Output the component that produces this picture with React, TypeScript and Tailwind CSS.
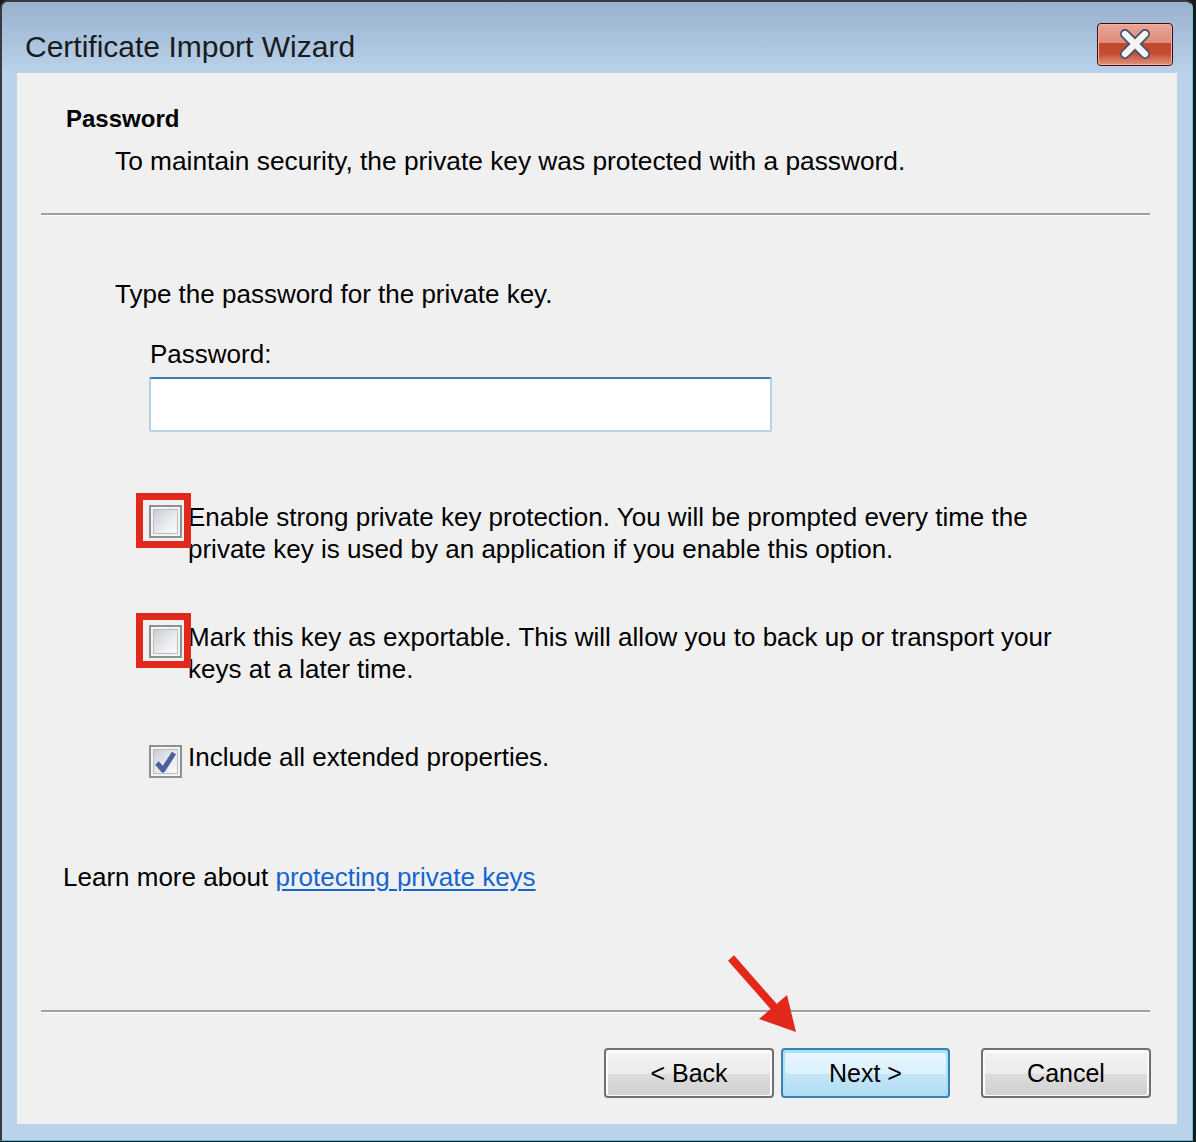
import React from 'react';

const Checkbox = ({ checked = false }: { checked?: boolean }) => (
  <div className="w-[33px] h-[33px] shrink-0 border-2 border-[#8e8f8f] bg-[#f4f4f4] p-[2px]">
    <div className="relative w-full h-full border border-[#b9bcc2] bg-gradient-to-br from-[#c9cdd4] via-[#e6e8eb] to-[#fafafa]">
      {checked && (
        <svg viewBox="0 0 23 23" className="absolute inset-0 w-full h-full">
          <path d="M3 13 L9 20 L20 3" fill="none" stroke="#4b62a0" strokeWidth="5" strokeLinejoin="round" />
        </svg>
      )}
    </div>
  </div>
);

const Highlight = () => (
  <div className="absolute -left-[13px] -top-[12px] w-[55px] h-[55px] border-[7px] border-[#e1281b]" />
);

const WinButton = ({ label, primary = false }: { label: string; primary?: boolean }) => (
  <button
    className={`h-[50px] rounded-[4px] border-2 p-[2px] ${
      primary ? 'w-[169px] border-[#3c7fb1] bg-[#a6e3f8]' : 'w-[170px] border-[#707070] bg-[#fbfbfb]'
    }`}
  >
    <div
      className={`flex h-full flex-col overflow-hidden rounded-[2px] ${
        primary ? 'bg-[#d6effb]' : 'bg-[#e7e7e7]'
      }`}
    >
      <div className={`h-1/2 ${primary ? 'bg-gradient-to-b from-[#eaf6fd] to-[#d9f0fc]' : 'bg-gradient-to-b from-[#f2f2f2] to-[#ebebeb]'}`} />
      <div className={`h-1/2 ${primary ? 'bg-gradient-to-b from-[#c4e6f8] to-[#b2dcf3]' : 'bg-gradient-to-b from-[#dddddd] to-[#d0d0d0]'}`} />
    </div>
    <span className="relative -mt-[42px] block text-[25px] leading-[40px] text-black">{label}</span>
  </button>
);

export default function App() {
  return (
    <div
      className="relative w-[1196px] h-[1142px] overflow-hidden bg-[#1a1a1a]"
      style={{ fontFamily: '"Liberation Sans", Arial, sans-serif' }}
    >
      {/* window frame */}
      <div className="flex w-[1193px] h-[1141px] flex-col rounded-t-[8px] border-t-2 border-l-2 border-r border-b border-t-[#3a3a3a] border-l-[#3a3a3a] border-r-[#5cc6de] border-b-[#4cc3dd] bg-[#bad2ea]">
        {/* title bar */}
        <div className="flex h-[71px] shrink-0 items-start justify-between rounded-t-[6px] bg-gradient-to-b from-[#98b2cf] to-[#bad2ea] pl-[23px] pr-[19px]">
          <span className="mt-[25px] text-[30px] leading-[40px] text-[#1b1b1b]">Certificate Import Wizard</span>
          <div className="mt-[21px] w-[76px] h-[43px] rounded-[4px] border border-[#3d0d0d] p-px bg-[#f0b3a6]">
            <div className="relative flex h-full flex-col overflow-hidden rounded-[3px]">
              <div className="h-[45%] bg-gradient-to-b from-[#e9a596] to-[#dc8b79]" />
              <div className="h-[55%] bg-gradient-to-b from-[#c2462b] via-[#c54d31] to-[#dd8c78]" />
              <svg viewBox="0 0 76 43" className="absolute inset-0 w-full h-full">
                <path d="M27 10 L49 32 M49 10 L27 32" stroke="#47526a" strokeWidth="11" strokeLinecap="round" />
                <path d="M27 10 L49 32 M49 10 L27 32" stroke="#f4f4f4" strokeWidth="7" strokeLinecap="round" />
              </svg>
            </div>
          </div>
        </div>

        {/* client area */}
        <div className="ml-[15px] flex w-[1160px] h-[1051px] shrink-0 flex-col bg-[#f0f0f0] text-[26px] leading-[32px] text-black">
          <div className="mt-[30px] pl-[49px] text-[24px] font-bold">Password</div>
          <div className="mt-[10px] pl-[98px] whitespace-nowrap text-[26.3px]">
            To maintain security, the private key was protected with a password.
          </div>

          <div className="mt-[36px] ml-[24px] mr-[27px]">
            <div className="h-[2px] bg-[#a0a0a0]" />
            <div className="h-px bg-white" />
          </div>

          <div className="mt-[62px] pl-[98px]">Type the password for the private key.</div>
          <div className="mt-[28px] pl-[133px]">Password:</div>
          <div className="mt-[7px] ml-[132px] w-[623px] h-[55px] rounded-[2px] border-2 border-[#b7d1ea] border-t-[#3d7cb0] bg-white" />

          <div className="mt-[69px] flex items-start pl-[132px]">
            <div className="relative mt-[4px]">
              <Highlight />
              <Checkbox />
            </div>
            <div className="ml-[6px] whitespace-nowrap">
              Enable strong private key protection. You will be prompted every time the
              <br />
              private key is used by an application if you enable this option.
            </div>
          </div>

          <div className="mt-[56px] flex items-start pl-[132px]">
            <div className="relative mt-[4px]">
              <Highlight />
              <Checkbox />
            </div>
            <div className="ml-[6px] whitespace-nowrap">
              Mark this key as exportable. This will allow you to back up or transport your
              <br />
              keys at a later time.
            </div>
          </div>

          <div className="mt-[56px] flex h-[32px] items-start pl-[132px]">
            <div className="mt-[4px]">
              <Checkbox checked />
            </div>
            <div className="ml-[6px] whitespace-nowrap">Include all extended properties.</div>
          </div>

          <div className="mt-[88px] pl-[46px] whitespace-nowrap">
            Learn more about{' '}
            <a className="text-[#1465d0] underline decoration-2 underline-offset-[3px]">protecting private keys</a>
          </div>

          <div className="mt-[117px] ml-[24px] mr-[27px]">
            <div className="h-[2px] bg-[#a0a0a0]" />
            <div className="h-px bg-white" />
          </div>

          <div className="mt-[35px] flex justify-end gap-[7px] pr-[26px]">
            <WinButton label="< Back" />
            <WinButton label="Next >" primary />
            <div className="w-[17px]" />
            <WinButton label="Cancel" />
          </div>
        </div>
      </div>

      {/* annotation arrow */}
      <svg className="pointer-events-none absolute inset-0" width="1196" height="1142">
        <line x1="731" y1="958" x2="775" y2="1008" stroke="#e1281b" strokeWidth="8" />
        <polygon points="796,1032 759,1019 787,995" fill="#e1281b" />
      </svg>
    </div>
  );
}
